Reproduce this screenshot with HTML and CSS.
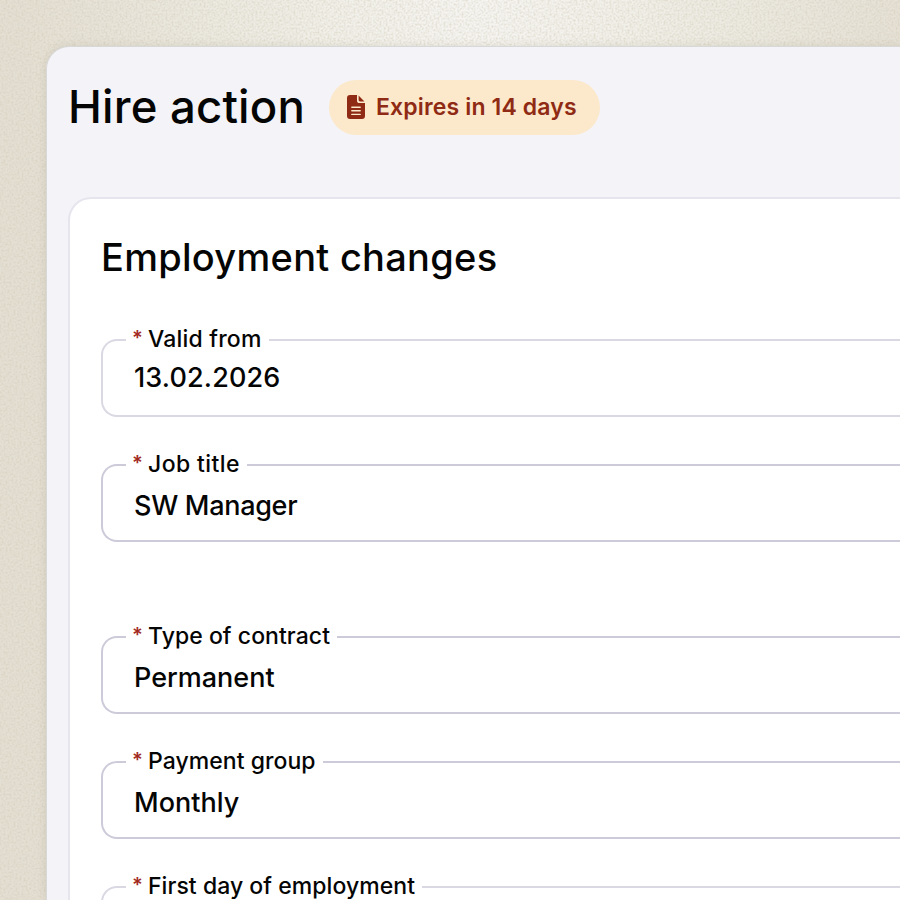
FILE: index.html
```
<!DOCTYPE html>
<html lang="en">
<head>
    <meta charset="utf-8">
    <title>Hire action</title>
    <link rel="stylesheet" href="styles.css">
</head>
<body>
    <svg class="grain" width="900" height="900" aria-hidden="true">
        <filter id="noise" x="0" y="0" width="100%" height="100%">
            <feTurbulence type="fractalNoise" baseFrequency="0.5" numOctaves="2" seed="4" />
            <feColorMatrix values="0 0 0 0 0.62  0 0 0 0 0.57  0 0 0 0 0.44  1.1 0 0 0 -0.42" />
        </filter>
        <rect width="900" height="900" filter="url(#noise)" />
    </svg>

    <main class="panel">
        <header class="panel-header">
            <h1>Hire action</h1>
            <div class="badge">
                <svg class="badge-icon" viewBox="0 0 18 24" width="18" height="24">
                    <path d="M3 0H10V5.4Q10 8 12.6 8H18V21Q18 24 15 24H3Q0 24 0 21V3Q0 0 3 0Z" fill="#8f2a14" />
                    <path d="M11.6 0.6L17.4 6.4H13Q11.6 6.4 11.6 5Z" fill="#8f2a14" />
                    <path d="M4.8 12.2H13.2M4.8 15.8H13.2M4.8 19.4H13.2" stroke="#fce8ca" stroke-width="1.4" stroke-linecap="round" />
                </svg>
                <span>Expires in 14 days</span>
            </div>
        </header>

        <form class="card">
            <h2>Employment changes</h2>
            <fieldset class="field field-date">
                <legend class="wide"><span class="required">*</span>Valid from</legend>
                <div class="value">13.02.2026</div>
            </fieldset>
            <fieldset class="field">
                <legend class="wider"><span class="required">*</span>Job title</legend>
                <div class="value tight">SW Manager</div>
            </fieldset>
            <fieldset class="field field-spaced">
                <legend><span class="required">*</span>Type of contract</legend>
                <div class="value">Permanent</div>
            </fieldset>
            <fieldset class="field">
                <legend><span class="required">*</span>Payment group</legend>
                <div class="value">Monthly</div>
            </fieldset>
            <fieldset class="field field-date">
                <legend><span class="required">*</span>First day of employment</legend>
            </fieldset>
        </form>
    </main>
</body>
</html>
```
FILE: styles.css
```
* {
    box-sizing: border-box;
}
body {
    margin: 0;
    height: 900px;
    padding: 46px 0 0 46px;
    overflow: hidden;
    position: relative;
    font-family: Inter, "Liberation Sans", sans-serif;
    color: #050505;
    background: radial-gradient(ellipse 460px 620px at 480px 0, #f6f5f2 0%, #f0efe8 35%, #e4dfd3 100%);
}
.grain {
    position: absolute;
    top: 0;
    left: 0;
}
.panel {
    position: relative;
    height: 854px;
    padding: 33px 0 0 22px;
    background: #f4f3f8;
    border: 1px solid #d9d8d8;
    border-width: 1px 0 0 1px;
    border-radius: 23px 0 0 0;
    box-shadow: 0 0 8px rgba(80, 70, 40, 0.12);
}
.panel-header {
    display: flex;
    align-items: center;
    height: 54px;
    margin-bottom: 63px;
}
h1 {
    width: 260px;
    margin: -2px 0 0 -1px;
    font-size: 45.5px;
    font-weight: 500;
    line-height: 55px;
    letter-spacing: 0.2px;
}
.badge {
    display: flex;
    align-items: center;
    height: 55px;
    margin-left: 1px;
    padding: 0 23px 0 18px;
    gap: 11px;
    border-radius: 28px;
    background: #fce8ca;
    color: #8f2a14;
    font-size: 23px;
    font-weight: 600;
    letter-spacing: 0.15px;
}
.card {
    height: 703px;
    margin-left: -1px;
    padding: 34px 0 0 31px;
    overflow: hidden;
    background: #fff;
    border: 2px solid #e6e5ee;
    border-width: 2px 0 0 2px;
    border-radius: 23px 0 0 0;
}
h2 {
    margin: 0 0 46px;
    font-size: 38px;
    font-weight: 500;
    line-height: 48px;
    letter-spacing: 0.28px;
}
.field {
    height: 90px;
    margin: 0 0 35px;
    padding: 0 0 0 23px;
    border: 2px solid #cdcad9;
    border-right: 0;
    border-radius: 16px 0 0 16px;
}
.field-date {
    border-color: #dad8e3;
}
.field-spaced {
    margin-top: 82px;
}
legend {
    height: 26px;
    padding: 0 7px;
    font-size: 23px;
    font-weight: 500;
    line-height: 24px;
    letter-spacing: 0.05px;
}
.wide {
    letter-spacing: 0.2px;
}
.wider {
    letter-spacing: 0.4px;
}
.required {
    display: inline-block;
    width: 15px;
    color: #a32a1e;
    font-size: 20px;
    font-weight: 600;
    line-height: 20px;
    letter-spacing: 0;
    text-indent: -1px;
    vertical-align: 2px;
}
.value {
    padding: 12px 0 0 8px;
    font-size: 27px;
    font-weight: 500;
    line-height: 32px;
}
.field-date .value {
    padding-top: 9px;
    letter-spacing: 0.15px;
}
.tight {
    letter-spacing: -0.3px;
}
```
